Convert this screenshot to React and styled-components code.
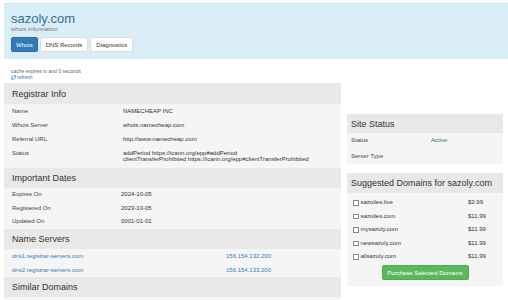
import React from 'react';
import styled, { createGlobalStyle } from 'styled-components';
import { RefreshCw } from 'lucide-react';

const GlobalStyle = createGlobalStyle`
  body {
    margin: 0;
    background: #fff;
    font-family: "Liberation Sans", Arial, sans-serif;
    color: #333;
    overflow: hidden;
  }
`;

const Jumbotron = styled.div`
  margin: 3px 0 0 4px;
  padding: 7px 7px 7px 7px;
  background-color: #d9edf7;
  border-top: 1px solid #cde6f1;
`;

const Title = styled.h1`
  margin: 0;
  font-size: 13px;
  line-height: 15px;
  font-weight: normal;
  color: #31708f;
`;

const Subtitle = styled.div`
  font-size: 6px;
  line-height: 7px;
  color: #777;
  margin-top: 0;
`;

const Tabs = styled.div`
  display: flex;
  gap: 2px;
  margin-top: 4px;
`;

const TabButton = styled.button`
  height: 15px;
  padding: 0 ${(p) => (p.active ? 4 : 5)}px;
  font-family: inherit;
  font-size: 6px;
  border-radius: 2px;
  border: 1px solid ${(p) => (p.active ? '#2e6da4' : '#ddd')};
  background-color: ${(p) => (p.active ? '#337ab7' : '#fff')};
  color: ${(p) => (p.active ? '#fff' : '#333')};
  cursor: pointer;
`;

const Main = styled.div`
  display: grid;
  grid-template-columns: 337px 156px;
  gap: 6px;
  margin-top: 9px;
  padding-left: 4px;
`;

const LeftColumn = styled.div`
  display: flex;
  flex-direction: column;
`;

const RightColumn = styled.div`
  display: flex;
  flex-direction: column;
  gap: 9px;
  padding-top: 46px;
`;

const CacheNote = styled.div`
  padding-left: 7px;
  font-size: 5px;
  line-height: 6px;
  color: #666;
`;

const RefreshLink = styled.a`
  display: flex;
  align-items: center;
  gap: 1px;
  padding-left: 7px;
  margin-bottom: 3px;
  font-size: 5px;
  line-height: 6px;
  color: #337ab7;
  text-decoration: none;
`;

const Panel = styled.div`
  background-color: #f5f5f5;
  padding-bottom: ${(p) => p.bottom || 0}px;
`;

const PanelHeading = styled.div`
  display: flex;
  align-items: center;
  height: ${(p) => p.h || 20}px;
  padding: 0 ${(p) => p.pad || 8}px;
  background-color: #e8e8e8;
  font-size: 9px;
  color: #333;
`;

const Row = styled.div`
  display: grid;
  grid-template-columns: ${(p) => p.label}px 1fr;
  padding: ${(p) => p.py || 4}px ${(p) => p.pad || 8}px;
  font-size: 6px;
  line-height: ${(p) => p.lh || 6}px;
  color: #333;
`;

const Label = styled.span`
  color: #444;
`;

const Link = styled.a`
  color: #337ab7;
  text-decoration: none;
`;

const Green = styled.span`
  color: #3c763d;
`;

const DomainName = styled.label`
  display: flex;
  align-items: center;
  gap: 2px;
`;

const Check = styled.input`
  appearance: none;
  margin: 0;
  width: 5.5px;
  height: 5.5px;
  border: 0.7px solid #888;
  border-radius: 0.5px;
  background: #fff;
  box-sizing: border-box;
`;

const ButtonRow = styled.div`
  display: flex;
  justify-content: center;
  margin-top: 1.5px;
`;

const PurchaseButton = styled.button`
  width: 87px;
  height: 15px;
  padding: 0;
  font-family: inherit;
  font-size: 6px;
  color: #fff;
  background-color: #5cb85c;
  border: 1px solid #4cae4c;
  border-radius: 2px;
`;

const registrar = [
  ['Name', 'NAMECHEAP INC'],
  ['Whois Server', 'whois.namecheap.com'],
  ['Referral URL', 'http://www.namecheap.com'],
];

const dates = [
  ['Expires On', '2024-10-05'],
  ['Registered On', '2023-10-05'],
  ['Updated On', '0001-01-01'],
];

const nameServers = [
  ['dns1.registrar-servers.com', '156.154.132.200'],
  ['dns2.registrar-servers.com', '156.154.133.200'],
];

const suggestions = [
  ['sazoiles.live', '$3.99'],
  ['sazoiles.com', '$11.99'],
  ['mysazoly.com', '$11.99'],
  ['newsazoly.com', '$11.99'],
  ['allsazoly.com', '$11.99'],
];

const App = () => {
  return (
    <>
      <GlobalStyle />
      <Jumbotron>
        <Title>sazoly.com</Title>
        <Subtitle>whois information</Subtitle>
        <Tabs>
          <TabButton active>Whois</TabButton>
          <TabButton>DNS Records</TabButton>
          <TabButton>Diagnostics</TabButton>
        </Tabs>
      </Jumbotron>
      <Main>
        <LeftColumn>
          <CacheNote>cache expires in and 0 seconds</CacheNote>
          <RefreshLink href="#">
            <RefreshCw size={5} strokeWidth={3} />
            refresh
          </RefreshLink>
          <Panel bottom={2}>
            <PanelHeading h={21}>Registrar Info</PanelHeading>
            {registrar.map(([k, v]) => (
              <Row label={111} key={k}>
                <Label>{k}</Label>
                <span>{v}</span>
              </Row>
            ))}
            <Row label={111}>
              <Label>Status</Label>
              <span>
                addPeriod https://icann.org/epp#addPeriod
                <br />
                clientTransferProhibited https://icann.org/epp#clientTransferProhibited
              </span>
            </Row>
          </Panel>
          <Panel>
            <PanelHeading>Important Dates</PanelHeading>
            {dates.map(([k, v]) => (
              <Row label={109} lh={5.5} key={k}>
                <Label>{k}</Label>
                <span>{v}</span>
              </Row>
            ))}
            <PanelHeading>Name Servers</PanelHeading>
            {nameServers.map(([host, ip]) => (
              <Row label={214} key={host}>
                <Link href="#">{host}</Link>
                <Link href="#">{ip}</Link>
              </Row>
            ))}
            <PanelHeading>Similar Domains</PanelHeading>
            <Row label={111}>&nbsp;</Row>
          </Panel>
        </LeftColumn>
        <RightColumn>
          <Panel>
            <PanelHeading h={19} pad={4}>Site Status</PanelHeading>
            <Row label={80} pad={4} py={5} lh={5.5}>
              <Label>Status</Label>
              <Green>Active</Green>
            </Row>
            <Row label={80} pad={4} py={5} lh={5.5}>
              <Label>Server Type</Label>
              <span></span>
            </Row>
          </Panel>
          <Panel bottom={6}>
            <PanelHeading pad={4}>Suggested Domains for sazoly.com</PanelHeading>
            <div style={{ paddingTop: 3 }}>
              {suggestions.map(([d, price]) => (
                <Row label={115} pad={6} lh={5.5} key={d}>
                  <DomainName>
                    <Check type="checkbox" />
                    {d}
                  </DomainName>
                  <span>{price}</span>
                </Row>
              ))}
            </div>
            <ButtonRow>
              <PurchaseButton>Purchase Selected Domains</PurchaseButton>
            </ButtonRow>
          </Panel>
        </RightColumn>
      </Main>
    </>
  );
};

export default App;
